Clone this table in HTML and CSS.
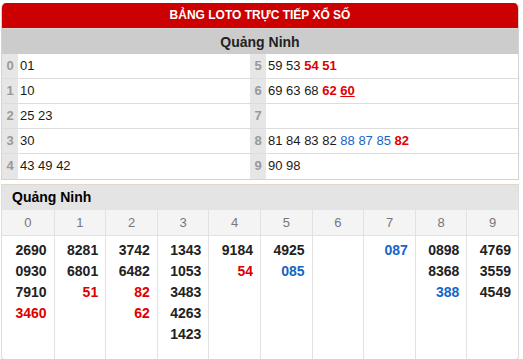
FILE: index.html
```
<!DOCTYPE html>
<html lang="vi">
<head>
<meta charset="utf-8">
<link rel="stylesheet" href="styles.css">
</head>
<body>
<div class="wrap">
  <div class="loto">
    <div class="title">BẢNG LOTO TRỰC TIẾP XỔ SỐ</div>
    <div class="prov">Quảng Ninh</div>
    <div class="grid">
      <div class="row"><div class="h">0</div><div class="v">01</div><div class="h">5</div><div class="v">59 53 <b class="r">54</b> <b class="r">51</b></div></div>
      <div class="row"><div class="h">1</div><div class="v">10</div><div class="h">6</div><div class="v">69 63 68 <b class="r">62</b> <b class="r u">60</b></div></div>
      <div class="row"><div class="h">2</div><div class="v">25 23</div><div class="h">7</div><div class="v"></div></div>
      <div class="row"><div class="h">3</div><div class="v">30</div><div class="h">8</div><div class="v">81 84 83 82 <span class="bl">88</span> <span class="bl">87</span> <span class="bl">85</span> <b class="r">82</b></div></div>
      <div class="row last"><div class="h">4</div><div class="v">43 49 42</div><div class="h">9</div><div class="v">90 98</div></div>
    </div>
  </div>
  <div class="dau">
    <div class="dtitle">Quảng Ninh</div>
    <div class="cols head">
      <div>0</div><div>1</div><div>2</div><div>3</div><div>4</div><div>5</div><div>6</div><div>7</div><div>8</div><div>9</div>
    </div>
    <div class="cols body">
      <div><span>2690</span><span>0930</span><span>7910</span><span class="r">3460</span></div>
      <div><span>8281</span><span>6801</span><span class="r">51</span></div>
      <div><span>3742</span><span>6482</span><span class="r">82</span><span class="r">62</span></div>
      <div><span>1343</span><span>1053</span><span>3483</span><span>4263</span><span>1423</span></div>
      <div><span>9184</span><span class="r">54</span></div>
      <div><span>4925</span><span class="bl">085</span></div>
      <div></div>
      <div><span class="bl">087</span></div>
      <div><span>0898</span><span>8368</span><span class="bl">388</span></div>
      <div><span>4769</span><span>3559</span><span>4549</span></div>
    </div>
  </div>
</div>
</body>
</html>
```
FILE: styles.css
```
* { box-sizing: border-box; }
body { margin: 0; background: #fff; font-family: "Liberation Sans", Arial, sans-serif; }
.wrap { width: 518px; margin: 3px 0 0 1px; }
.loto { border: 1px solid #d4d4d4; border-top: 0; border-radius: 5px 5px 0 0; overflow: hidden; }
.title { height: 25px; line-height: 25px; background: #cc0000; color: #fff; font-weight: bold; font-size: 12px; text-align: center; }
.prov { height: 26px; line-height: 26px; background: #cccccc; color: #222; font-weight: bold; font-size: 14px; text-align: center; border-top: 1px solid #d8d8d8; }
.row { display: grid; grid-template-columns: 16px 232px 16px 1fr; height: 25px; border-bottom: 1px solid #ddd; }
.row.last { border-bottom: 0; }
.h { background: #e6e6e6; color: #999; font-weight: bold; font-size: 13px; line-height: 24px; text-align: center; }
.v { font-size: 13px; line-height: 24px; color: #1a1a1a; padding-left: 2px; }
.v b { font-weight: bold; }
.r { color: #e00000; }
.bl { color: #1565c8; }
.u { text-decoration: underline; }
.dau { margin-top: 4px; border: 1px solid #ddd; border-top: 1px solid #e0d8c8; border-radius: 0 0 4px 4px; }
.dtitle { height: 25px; line-height: 25px; background: #e4e4e4; color: #000; font-weight: bold; font-size: 14px; padding-left: 10px; }
.cols { display: grid; grid-template-columns: repeat(10, 1fr); }
.cols > div { border-left: 1px solid #e2e2e2; }
.cols > div:first-child { border-left: 0; }
.head { height: 26px; background: #f4f4f4; border-bottom: 1px solid #e2e2e2; }
.head > div { text-align: center; line-height: 25px; font-size: 13px; color: #777; }
.body { height: 123px; }
.body > div { display: flex; flex-direction: column; align-items: flex-end; padding: 4px 7px 0 0; }
.body span { font-size: 14px; font-weight: bold; line-height: 21px; color: #222; }
.body span.r { color: #e00000; }
.body span.bl { color: #1565c8; }
```
